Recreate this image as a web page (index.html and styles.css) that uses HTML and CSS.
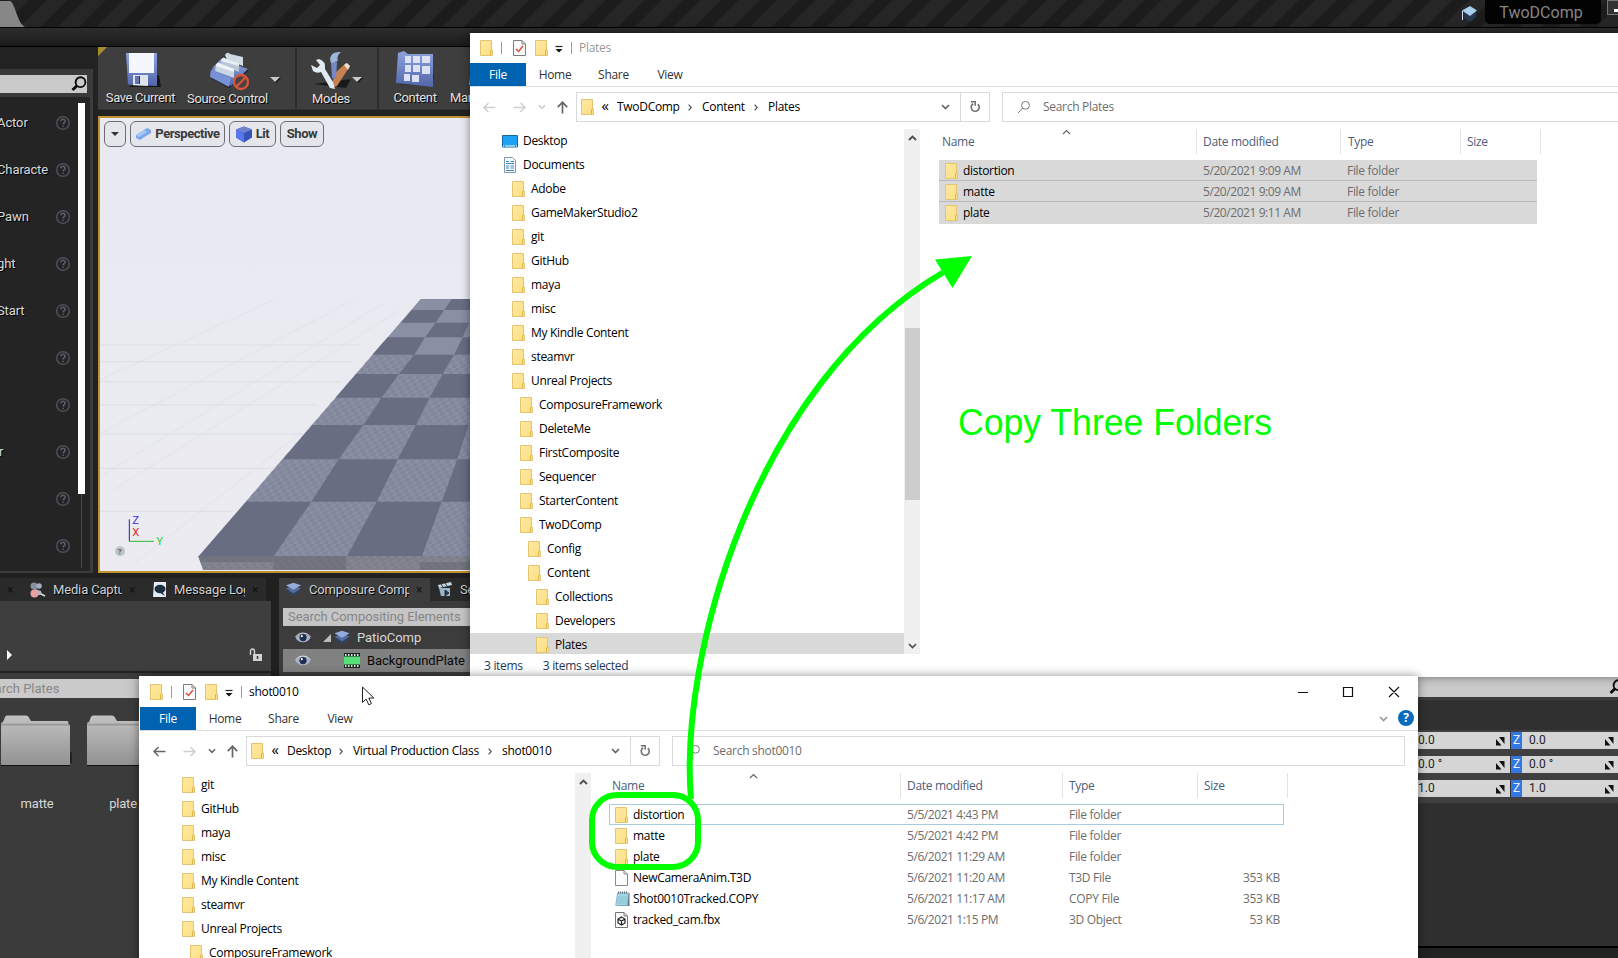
FILE: index.html
```html
<!DOCTYPE html>
<html lang="en">
<head>
<meta charset="utf-8">
<title>TwoDComp</title>
<link rel="stylesheet" href="styles.css">
</head>
<body>
<svg class="defs" width="0" height="0">
  <defs>
    <linearGradient id="gy" x1="0" x2="1" y1="0" y2="1"><stop offset="0" stop-color="#ffe9a2"/><stop offset="1" stop-color="#fbdf82"/></linearGradient>
    <linearGradient id="gb" x1="0" x2="0" y1="0" y2="1"><stop offset="0" stop-color="#8ea3dd"/><stop offset="1" stop-color="#5267ab"/></linearGradient>
    <linearGradient id="gf" x1="0" x2="0" y1="0" y2="1"><stop offset="0" stop-color="#c2c2c2"/><stop offset="1" stop-color="#929292"/></linearGradient>
    <symbol id="folder" viewBox="0 0 13 16"><path d="M.5.5h11v9.500h1v5.500h-12z" fill="url(#gy)" stroke="#e3c470"/><path d="M10.500 15v-4l1-1.500" fill="none" stroke="#dcb44c"/></symbol>
    <symbol id="check" viewBox="0 0 13 16"><path d="M.5.5h8.500l3.500 3.500v11.500h-12z" fill="#fafafa" stroke="#7d7d7d"/><path d="M9 .5v3.500h3.500" fill="none" stroke="#7d7d7d"/><path d="M3 9l2.500 2.500L10 6" fill="none" stroke="#d9513a" stroke-width="1.500"/></symbol>
    <symbol id="qat" viewBox="0 0 8 8"><path d="M.5 1.500h7" stroke="#222" stroke-width="1.200"/><path d="M.5 4h7L4 7.500z" fill="#111"/></symbol>
    <symbol id="back" viewBox="0 0 13 11"><path d="M12.500 5.500H1.200M5.500 1 1 5.500 5.500 10" fill="none" stroke="currentColor" stroke-width="1.500"/></symbol>
    <symbol id="fwd" viewBox="0 0 13 11"><path d="M.5 5.500h11.300M7.500 1 12 5.500 7.500 10" fill="none" stroke="currentColor" stroke-width="1.500"/></symbol>
    <symbol id="up" viewBox="0 0 11 13"><path d="M5.500 12.500V1.500M.8 6.200 5.500 1.200l4.700 5" fill="none" stroke="currentColor" stroke-width="1.700"/></symbol>
    <symbol id="down" viewBox="0 0 9 6"><path d="M1 1l3.500 3.500L8 1" fill="none" stroke="currentColor" stroke-width="1.700"/></symbol>
    <symbol id="caret" viewBox="0 0 9 6"><path d="M1 5l3.500-3.500L8 5" fill="none" stroke="currentColor" stroke-width="1.200"/></symbol>
    <symbol id="scup" viewBox="0 0 9 6"><path d="M1 5l3.500-3.500L8 5" fill="none" stroke="currentColor" stroke-width="1.900"/></symbol>
    <symbol id="refresh" viewBox="0 0 12 14"><path d="M8.800 4.200a4 4 0 1 1-4.600-.4" fill="none" stroke="#707070" stroke-width="1.600"/><path d="M1.800 1.800h4.400v4" fill="none" stroke="#707070" stroke-width="1.500"/></symbol>
    <symbol id="mag" viewBox="0 0 14 14"><circle cx="8.500" cy="5.300" r="3.900" fill="none" stroke="#777"/><path d="M5.600 8.200 1 13" stroke="#777"/></symbol>
    <symbol id="sep" viewBox="0 0 4 7"><path d="M.6.7 3.200 3.500.6 6.300" fill="none" stroke="#555" stroke-width="1.200"/></symbol>
    <symbol id="help" viewBox="0 0 16 16"><circle cx="8" cy="8" r="6.300" fill="none" stroke="#4c4f59" stroke-width="1.600"/><path d="M5.800 6.300c.2-2.800 4.500-2.500 4.300 0C10 7.600 8.200 7.700 8.100 9.500M8.100 10.700v1.400" fill="none" stroke="#5a5e69" stroke-width="1.600"/></symbol>
    <symbol id="layers" viewBox="0 0 18 16"><path d="M1 10l8-3 8 3-8 5z" fill="#33435f"/><path d="M1 7l8-3 8 3-8 5z" fill="#566da3"/><path d="M1 3.500 9 .8l8 2.700-8 4.700z" fill="#93acd9"/></symbol>
    <symbol id="eye" viewBox="0 0 16 12"><path d="M.5 6C4 .6 12 .6 15.500 6 12 11.600 4 11.600.5 6z" fill="#a9b5ce"/><circle cx="8" cy="5.600" r="3.600" fill="#222d4c"/><circle cx="6.800" cy="4.200" r="1.100" fill="#fff"/><path d="M.5 5C4-.2 12-.2 15.500 5" fill="none" stroke="#e6ebf5"/></symbol>
    <symbol id="resize" viewBox="0 0 10 10"><path d="M4 1h5.500v7zM1 3v6.500h5.500z" fill="#111"/></symbol>
    <symbol id="searchb" viewBox="0 0 16 16"><circle cx="9.500" cy="6.200" r="4.900" fill="none" stroke="#0a0a0a" stroke-width="1.900"/><path d="M6.200 9.500 1.500 14" stroke="#0a0a0a" stroke-width="2.800"/></symbol>
    <symbol id="bigfolder" viewBox="0 0 72 52"><path d="M4 48h69V37z" fill="#222"/><path d="M1 50V9q0-2 2-2l2-5q.6-1.500 2-1.500h19q1.800 0 2.600 1.500L31 6h36q1.500 0 1.500 1.500V10h1.500v40z" fill="url(#gf)"/><path d="M1 10h69M1 9.200h67" stroke="#8d8d8d" stroke-width=".8"/><path d="M1 50.500h69" stroke="#111"/></symbol>
  </defs>
</svg>

<div class="screen">
  <div class="titlebar"><svg class="tab-end" width="25" height="27"><path d="M0 1h10c5 1 7 22 15 26H0z" fill="#878787"/></svg>
    <div class="project"><svg width="17" height="17" viewBox="0 0 17 17"><path d="M3 7v6l6 4 6-5V6z" fill="#27384e"/><path d="M1 5.500 9 1l7 4.500L9 11z" fill="#a8cfeb"/><path d="M1.500 6v9" stroke="#d9e1e6"/></svg><span class="project-name">TwoDComp</span><i class="winmin"></i></div>
  </div>
  <div class="menubar"></div>

  <div class="workspace">
    <div class="place">
      <div class="place-search"><i></i><svg width="16" height="16"><use href="#searchb"/></svg></div>
      <div class="place-body">
        <ul class="actors">
          <li><span>Actor</span><svg><use href="#help"/></svg></li>
          <li><span>Characte</span><svg><use href="#help"/></svg></li>
          <li><span>Pawn</span><svg><use href="#help"/></svg></li>
          <li><span>ght</span><svg><use href="#help"/></svg></li>
          <li><span>Start</span><svg><use href="#help"/></svg></li>
          <li><span></span><svg><use href="#help"/></svg></li>
          <li><span></span><svg><use href="#help"/></svg></li>
          <li><span class="in">r</span><svg><use href="#help"/></svg></li>
          <li><span></span><svg><use href="#help"/></svg></li>
          <li><span></span><svg><use href="#help"/></svg></li>
        </ul>
        <div class="place-scroll"><b></b><i></i></div>
      </div>
    </div>
    <div class="center">
      <div class="toolbar">
        <div class="tool t-save"><svg width="36" height="38" viewBox="0 0 36 38"><path d="M3 36h33l-2-12z" fill="#181818"/><path d="M1 2h31v33l-29-1.500z" fill="url(#gb)"/><path d="M4 2h25v20H4z" fill="#f6f7fc"/><path d="M8 24h15v11l-15-.7z" fill="#dfe3ee"/><path d="M10 25h4v8h-4z" fill="#6476b0"/><path d="M14.500 25v8" stroke="#333"/></svg><span>Save Current</span></div>
        <div class="tool t-source"><svg width="42" height="40" viewBox="0 0 42 40"><path d="M2 27l18 10 20-18-6-1z" fill="#191919"/><path d="M4 16 12 8l27 10-17 17L1 24z" fill="url(#gb)"/><path d="M16 4q2-4 5-1l13 3v9L18 9z" fill="#cfdae5"/><path d="M12 9q2-4 5-1l13 4v9L12 14z" fill="#b9c7d6"/><path d="M12 9q2-4 5-1l13 4v3L12 10z" fill="#e9f0f5"/><path d="M7 14q2-4 5-1l13 5v9L6 20z" fill="#c9d5e0"/><path d="M7 14q2-4 5-1l13 5v3L7 15z" fill="#eff5f8"/><path d="M2 19l20 8-2 9L1 26z" fill="#7892d5"/><circle cx="32" cy="31" r="7" fill="#4a4140" stroke="#d9563c" stroke-width="2.300"/><path d="M27 36 37 26" stroke="#d9563c" stroke-width="2.300"/></svg><span>Source Control</span></div>
        <i class="arrow a1"></i><i class="rule r1"></i>
        <div class="tool t-modes"><svg width="44" height="40" viewBox="0 0 44 40"><path d="M5 33l32 4 5-9z" fill="#191919"/><path d="M26 22 37 12l4 3-13 20-6 2z" fill="#c98151"/><path d="M35 14l3-2 3 3-2 4z" fill="#efdfce"/><path d="M22 11h6l-1 17-4-1z" fill="#7389c5"/><path d="M21 8q1-8 11-7-5 4-3 9l-7 2z" fill="#9db7da"/><path d="M2 14l2 6q4 3 8 1l9 16 5 1-2-7-8-13q1-8-6-10l-3 1 4 5-3 3z" fill="#e1ebf3"/></svg><span>Modes</span></div>
        <i class="arrow a2"></i><i class="rule r2"></i>
        <div class="tool t-content"><svg width="40" height="38" viewBox="0 0 40 38"><path d="M3 33l34 2 2-12z" fill="#191919"/><path d="M3 2l6-2 4 3h25v33L1 32z" fill="url(#gb)"/><g fill="#dce1f3"><path d="M10 5h6v7h-6zM18 5h7v7h-7zM27 5h8v7h-8zM10 14h6v7h-6zM18 14h7v7h-7zM27 15h8v8h-8zM9 23h6v7H9zM17 24h7v7h-7z"/></g></svg><span>Content</span></div>
        <div class="tool t-mar"><svg width="38" height="38" viewBox="0 0 38 38"><path d="M8 5h25v29H4z" fill="#a2b3c9"/></svg><span>Marketplace</span></div>
      </div>
      <div class="viewport">
        <svg class="scene" width="372" height="456" viewBox="294 -492 1116 1368">
          <defs>
            <linearGradient id="sky" x1="0" x2="0" y1="0" y2="1"><stop offset="0" stop-color="#e9e9f2"/><stop offset="1" stop-color="#ebebf1"/></linearGradient>
            <pattern id="weave" width="26" height="22" patternUnits="userSpaceOnUse" patternTransform="skewX(-28)"><path d="M0 0h13v11H0zM13 11h13v11H13z" fill="#5e6378" opacity=".2"/></pattern>
          </defs>
          <path d="M294-492h1116V876H294z" fill="url(#sky)"/>
          <g stroke="#d8d9e0" fill="none" stroke-width="2"><path d="M300 195h780M300 245h760M300 305h720M300 375h650M300 462h610M300 565h530M300 694h400"/><path d="M300 300 820 60M300 460 1060 60M300 590 1150 70M340 630 1200 90M390 860 940 430" opacity=".65"/></g>
          <path d="M1262 57H1410V876H612L595 830z" fill="#8a8fa4"/>
          <path d="M1115 224H1410V830H595z" fill="url(#weave)"/>
          <g fill="#686d82">
            <path d="M1355 57h55v33h-77zM1235 90h98l-26 38H1203z"/>
            <path d="M1307 128h100l-19 44h-113zM1163 172h112l-32 52H1117z"/>
            <path d="M1388 172h22v52h-48zM1243 224h119l-34 58h-131zM1068 282h129l-52 71H1007z"/>
            <path d="M1328 282h82v71h-121zM1145 353h144l-41 82H1090z"/>
            <path d="M937 435h153l-74 103H849zM1248 435h157l-33 103h-179z"/>
            <path d="M1016 538h177l-63 127H934zM1372 538h38v127h-85z"/>
            <path d="M739 665h195L820 830H595zM1130 665h195l-60 165h-225z"/>
          </g>
          <path d="M595 828H1410v48H612z" fill="#83868f"/><path d="M595 828h440l4 18H602zM820 846h220l-2 30H820zM1260 846h150v30h-150z" fill="#73767f"/><path d="M595 828H1410v48H612z" fill="url(#weave)"/>
          <g stroke-width="3" fill="none"><path d="M388 718v66" stroke="#2222a6"/><path d="M388 784h74" stroke="#25bd2f"/></g>
          <g class="axis"><text x="397" y="731" fill="#3930df">Z</text><text x="397" y="768" fill="#e52d27">X</text><text x="469" y="796" fill="#25d535">Y</text></g>
          <circle cx="360" cy="814" r="15" fill="#bcc3c9"/><text class="q" x="353" y="823">?</text>
        </svg>
        <div class="vbuttons"><span class="vb v1"><i></i></span><span class="vb v2"><svg width="16" height="14" viewBox="0 0 16 14"><path d="M1 8l8-5 3-2 4 2v3l-5 3-6 4-4-2z" fill="#7ca7ea"/><path d="M1 8l8-5 3 2-8 5z" fill="#a6c9f8"/></svg>Perspective</span><span class="vb v3"><svg width="16" height="17" viewBox="0 0 16 17"><path d="M0 3.500 8 .5l8 3v8L8 16.500 0 11.500z" fill="#3952ba"/><path d="M0 3.500 8 .5l8 3-8 3.500z" fill="#7183ce"/><path d="M0 3.500 8 7v9.500L0 11.500z" fill="#5976eb"/></svg>Lit</span><span class="vb v4">Show</span></div>
      </div>
    </div>
  </div>

  <div class="lower">
    <div class="browser">
      <div class="tabs"><span class="tab x0"><em>×</em></span><span class="tab x1"><svg width="16" height="16" viewBox="0 0 16 16"><circle cx="4" cy="4" r="3.500" fill="#858fa0"/><circle cx="9" cy="4" r="2.800" fill="#a2adbd"/><path d="M5 7l6 2 1 4H5z" fill="#aeb9c8"/><path d="M11 12l4 2" stroke="#ddd" stroke-width="1.500"/><circle cx="4.500" cy="11.500" r="4" fill="#e7a1a2"/></svg><span>Media Captu</span><em>×</em></span><span class="tab x2"><svg width="14" height="15" viewBox="0 0 14 15"><path d="M1 0h12v15H0z" fill="#e4edf7"/><ellipse cx="7" cy="7" rx="5.500" ry="4.200" fill="#1d2d40"/><path d="M9 9l3 5-6-4z" fill="#1d2d40"/></svg><span>Message Log</span><em>×</em></span></div>
      <div class="path"><i></i><svg width="14" height="14" viewBox="0 0 14 14"><path d="M1.500 7V3.500q0-2.500 2-2.500t2 2.500V7" fill="none" stroke="#d2d2d2" stroke-width="1.400"/><path d="M4 6h9v7H4z" fill="#d2d2d2"/><path d="M8.500 8v3" stroke="#333" stroke-width="1.500"/></svg></div>
      <div class="asset-search">Search Plates</div>
      <div class="assets"><div><svg width="72" height="52"><use href="#bigfolder"/></svg><span>matte</span></div><div><svg width="72" height="52"><use href="#bigfolder"/></svg><span>plate</span></div></div>
    </div>
    <div class="composure">
      <div class="tabs"><span class="tab x3"><svg width="17" height="15"><use href="#layers"/></svg><span>Composure Compo</span><em>×</em></span><span class="tab x4"><svg width="15" height="15" viewBox="0 0 15 15"><path d="M1 6h11v8H3z" fill="#9bb5cb"/><path d="M0 3l13-3 1 3L1 6z" fill="#c5d8e7"/><path d="M3 2l2 3M7 1l2 3M7 8l4 3-4 3z" fill="#253140" stroke="#253140"/></svg><span>Sequencer</span></span></div>
      <div class="comp-search">Search Compositing Elements</div>
      <div class="crow"><svg class="eye" width="16" height="12"><use href="#eye"/></svg><i class="tri"></i><svg width="18" height="15"><use href="#layers"/></svg><span>PatioComp</span></div>
      <div class="crow sel"><svg class="eye" width="16" height="12"><use href="#eye"/></svg><svg class="film" width="16" height="15" viewBox="0 0 16 15"><path d="M0 0h16v15H0z" fill="#18251d"/><path d="M1 1h1.500v2H1zM4 1h1.500v2H4zM7 1h1.500v2H7zM10 1h1.500v2H10zM13 1h1.500v2H13zM1 12h1.500v2H1zM4 12h1.500v2H4zM7 12h1.500v2H7zM10 12h1.500v2H10zM13 12h1.500v2H13z" fill="#e2e2e2"/><path d="M0 3.500h16v8H0z" fill="#57df79"/></svg><span>BackgroundPlate</span></div>
    </div>
    <div class="details">
      <div class="dsearch"><svg width="16" height="16"><use href="#searchb"/></svg></div>
      <div class="dgap"></div>
      <div class="dprops">
        <div class="drow"><span class="val a">0.0</span><svg><use href="#resize"/></svg><b>Z</b><span class="val">0.0</span><svg><use href="#resize"/></svg></div>
        <div class="drow"><span class="val a">0.0 °</span><svg><use href="#resize"/></svg><b>Z</b><span class="val">0.0 °</span><svg><use href="#resize"/></svg></div>
        <div class="drow"><span class="val a">1.0</span><svg><use href="#resize"/></svg><b>Z</b><span class="val">1.0</span><svg><use href="#resize"/></svg></div>
      </div>
    </div>
  </div>

  <section class="win win1">
    <header class="caption"><svg class="fo"><use href="#folder"/></svg><i class="bar b1"></i><svg class="fo"><use href="#check"/></svg><svg class="fo f2"><use href="#folder"/></svg><svg class="qat"><use href="#qat"/></svg><i class="bar b2"></i><span class="wtitle dim">Plates</span></header>
    <nav class="ribbon"><span class="file">File</span><span class="rt h">Home</span><span class="rt s">Share</span><span class="rt v">View</span></nav>
    <div class="address"><svg class="ar off"><use href="#back"/></svg><svg class="ar n2 off"><use href="#fwd"/></svg><svg class="dn off"><use href="#down"/></svg><svg class="up"><use href="#up"/></svg>
      <div class="crumbs"><svg class="fo"><use href="#folder"/></svg><span class="laq">«</span><span class="w-two">TwoDComp</span><svg class="sp"><use href="#sep"/></svg><span class="w-content">Content</span><svg class="sp"><use href="#sep"/></svg><span>Plates</span><svg class="drop"><use href="#down"/></svg><div class="rf"><svg><use href="#refresh"/></svg></div></div>
      <div class="search"><svg><use href="#mag"/></svg><span>Search Plates</span></div></div>
    <div class="panes">
      <ul class="tree">
        <li class="l0"><svg width="16" height="13" viewBox="0 0 16 13"><path d="M.5.500h15v11.500H.5z" fill="#1fa2f4" stroke="#1668a5"/><path d="M1 11h14" stroke="#fff" stroke-dasharray="1 1 10 1"/></svg><span>Desktop</span></li>
        <li class="l0"><svg width="16" height="16" viewBox="0 0 16 16"><path d="M2.500.5h8l3 3v12h-11z" fill="#f7fbfe" stroke="#7f96a6"/><path d="M4 4.500h3M8.500 4.500H12M4 6.500h8M4 9h3M8.500 9H12M4 11h3M8.500 11H12M4 13.500h8" stroke="#3b89bc"/></svg><span>Documents</span></li>
        <li class="l1"><svg class="fo"><use href="#folder"/></svg><span>Adobe</span></li>
        <li class="l1"><svg class="fo"><use href="#folder"/></svg><span>GameMakerStudio2</span></li>
        <li class="l1"><svg class="fo"><use href="#folder"/></svg><span>git</span></li>
        <li class="l1"><svg class="fo"><use href="#folder"/></svg><span>GitHub</span></li>
        <li class="l1"><svg class="fo"><use href="#folder"/></svg><span>maya</span></li>
        <li class="l1"><svg class="fo"><use href="#folder"/></svg><span>misc</span></li>
        <li class="l1"><svg class="fo"><use href="#folder"/></svg><span>My Kindle Content</span></li>
        <li class="l1"><svg class="fo"><use href="#folder"/></svg><span>steamvr</span></li>
        <li class="l1"><svg class="fo"><use href="#folder"/></svg><span>Unreal Projects</span></li>
        <li class="l2"><svg class="fo"><use href="#folder"/></svg><span>ComposureFramework</span></li>
        <li class="l2"><svg class="fo"><use href="#folder"/></svg><span>DeleteMe</span></li>
        <li class="l2"><svg class="fo"><use href="#folder"/></svg><span>FirstComposite</span></li>
        <li class="l2"><svg class="fo"><use href="#folder"/></svg><span>Sequencer</span></li>
        <li class="l2"><svg class="fo"><use href="#folder"/></svg><span>StarterContent</span></li>
        <li class="l2"><svg class="fo"><use href="#folder"/></svg><span>TwoDComp</span></li>
        <li class="l3"><svg class="fo"><use href="#folder"/></svg><span>Config</span></li>
        <li class="l3"><svg class="fo"><use href="#folder"/></svg><span>Content</span></li>
        <li class="l4"><svg class="fo"><use href="#folder"/></svg><span>Collections</span></li>
        <li class="l4"><svg class="fo"><use href="#folder"/></svg><span>Developers</span></li>
        <li class="l4 cur"><svg class="fo"><use href="#folder"/></svg><span>Plates</span></li>
      </ul>
      <div class="scroll"><svg><use href="#scup"/></svg><i></i><svg class="bot"><use href="#down"/></svg></div>
      <div class="list">
        <div class="head"><span class="c1">Name<svg><use href="#caret"/></svg></span><span class="c2">Date modified</span><span class="c3">Type</span><span class="c4">Size</span></div>
        <div class="row"><svg class="fo"><use href="#folder"/></svg><span class="nm">distortion</span><span class="dt">5/20/2021 9:09 AM</span><span class="ty">File folder</span></div>
        <div class="row"><svg class="fo"><use href="#folder"/></svg><span class="nm">matte</span><span class="dt">5/20/2021 9:09 AM</span><span class="ty">File folder</span></div>
        <div class="row"><svg class="fo"><use href="#folder"/></svg><span class="nm">plate</span><span class="dt">5/20/2021 9:11 AM</span><span class="ty">File folder</span></div>
      </div>
    </div>
    <footer class="status"><span>3 items</span><span>3 items selected</span></footer>
  </section>

  <section class="win win2">
    <header class="caption"><svg class="fo"><use href="#folder"/></svg><i class="bar b1"></i><svg class="fo"><use href="#check"/></svg><svg class="fo f2"><use href="#folder"/></svg><svg class="qat"><use href="#qat"/></svg><i class="bar b2"></i><span class="wtitle">shot0010</span>
      <svg class="controls" width="102" height="12"><path d="M0 6.500h10M45.500 1.500h9v9h-9zM91 1l10 10M101 1 91 11" fill="none" stroke="#111" stroke-width="1.200"/></svg></header>
    <nav class="ribbon"><span class="file">File</span><span class="rt h">Home</span><span class="rt s">Share</span><span class="rt v">View</span><svg class="exp"><use href="#down"/></svg><b class="qhelp">?</b></nav>
    <div class="address"><svg class="ar"><use href="#back"/></svg><svg class="ar n2 off"><use href="#fwd"/></svg><svg class="dn"><use href="#down"/></svg><svg class="up"><use href="#up"/></svg>
      <div class="crumbs"><svg class="fo"><use href="#folder"/></svg><span class="laq">«</span><span class="w-desktop">Desktop</span><svg class="sp"><use href="#sep"/></svg><span class="w-class">Virtual Production Class</span><svg class="sp"><use href="#sep"/></svg><span>shot0010</span><svg class="drop"><use href="#down"/></svg><div class="rf"><svg><use href="#refresh"/></svg></div></div>
      <div class="search"><svg><use href="#mag"/></svg><span>Search shot0010</span></div></div>
    <div class="panes">
      <ul class="tree">
        <li class="l1"><svg class="fo"><use href="#folder"/></svg><span>git</span></li>
        <li class="l1"><svg class="fo"><use href="#folder"/></svg><span>GitHub</span></li>
        <li class="l1"><svg class="fo"><use href="#folder"/></svg><span>maya</span></li>
        <li class="l1"><svg class="fo"><use href="#folder"/></svg><span>misc</span></li>
        <li class="l1"><svg class="fo"><use href="#folder"/></svg><span>My Kindle Content</span></li>
        <li class="l1"><svg class="fo"><use href="#folder"/></svg><span>steamvr</span></li>
        <li class="l1"><svg class="fo"><use href="#folder"/></svg><span>Unreal Projects</span></li>
        <li class="l2"><svg class="fo"><use href="#folder"/></svg><span>ComposureFramework</span></li>
      </ul>
      <div class="scroll"><svg><use href="#scup"/></svg></div>
      <div class="list">
        <div class="head"><span class="c1">Name<svg><use href="#caret"/></svg></span><span class="c2">Date modified</span><span class="c3">Type</span><span class="c4">Size</span></div>
        <div class="row focus"><svg class="fo"><use href="#folder"/></svg><span class="nm">distortion</span><span class="dt">5/5/2021 4:43 PM</span><span class="ty">File folder</span></div>
        <div class="row"><svg class="fo"><use href="#folder"/></svg><span class="nm">matte</span><span class="dt">5/5/2021 4:42 PM</span><span class="ty">File folder</span></div>
        <div class="row"><svg class="fo"><use href="#folder"/></svg><span class="nm">plate</span><span class="dt">5/6/2021 11:29 AM</span><span class="ty">File folder</span></div>
        <div class="row"><svg class="fo" viewBox="0 0 13 16"><path d="M.5.500h8.500l3.500 3.500v11.500H.5zM9 .5V4h3.500" fill="#fcfcfc" stroke="#8a8a8a"/></svg><span class="nm">NewCameraAnim.T3D</span><span class="dt">5/6/2021 11:20 AM</span><span class="ty">T3D File</span><span class="sz">353 KB</span></div>
        <div class="row"><svg class="fo wide" viewBox="0 0 15 16"><path d="M3 2h11.500v13H4z" fill="#60757d"/><path d="M2.500 2h11L12.500 14.500H.7z" fill="#a4d5e4" stroke="#79a7b5" stroke-width=".7"/><path d="M3 6h9M2.600 8h9M2.400 10h9M2.200 12h9" stroke="#82bdd0" stroke-width=".7"/><path d="M3.500.5v2M5.500.5v2M7.500.5v2M9.500.5v2M11.500.5v2" stroke="#54656c"/></svg><span class="nm">Shot0010Tracked.COPY</span><span class="dt">5/6/2021 11:17 AM</span><span class="ty">COPY File</span><span class="sz">353 KB</span></div>
        <div class="row"><svg class="fo" viewBox="0 0 13 16"><path d="M.5.500h8.500l3.500 3.500v11.500H.5zM9 .5V4h3.500" fill="#fff" stroke="#777"/><path d="M6.500 5l3.500 2v4l-3.500 2L3 11V7zM3 7l3.500 2L10 7M6.500 9v4" fill="none" stroke="#222" stroke-width="1.200"/></svg><span class="nm">tracked_cam.fbx</span><span class="dt">5/6/2021 1:15 PM</span><span class="ty">3D Object</span><span class="sz">53 KB</span></div>
      </div>
    </div>
  </section>

  <svg class="notes" width="1618" height="958">
    <path d="M691 799C679 660 752 385 943 272.500" fill="none" stroke="#0f0" stroke-width="6"/>
    <path d="M972 256l-37 3.500L952.500 288z" fill="#0f0"/>
    <rect x="592" y="795" width="106" height="72" rx="25" fill="none" stroke="#0f0" stroke-width="6"/>
    <text x="958" y="435" textLength="314" lengthAdjust="spacingAndGlyphs">Copy Three Folders</text>
    <path d="M362.500 687v15.500l3.600-3.400 2.700 5.700 2.600-1.200-2.600-5.600h5z" fill="#fff" stroke="#222"/>
  </svg>
</div>
</body>
</html>
```
FILE: styles.css
```css
* { box-sizing: border-box; }
body { margin: 0; }
ul { margin: 0; padding: 0; list-style: none; }
svg { flex: none; display: block; }
.defs { position: absolute; }
.screen { position: relative; width: 1618px; height: 958px; overflow: hidden; background: #1f1f1f; font: 13px/16px Roboto, sans-serif; color: #d8d8d8; white-space: nowrap; }

/* editor chrome */
.titlebar { height: 28px; display: flex; justify-content: space-between; border-bottom: 1px solid #000; background: repeating-linear-gradient(135deg, #1c1c1c 0 4.5px, #262626 6.5px 19.5px, #1c1c1c 21.5px 27.2px); }
.project { display: flex; align-items: flex-start; }
.project > svg { margin: 5px 7px 0 0; }
.project-name { width: 116px; height: 24px; background: #030303; border-radius: 0 0 5px 5px; color: #858585; font-size: 16px; line-height: 25px; text-align: center; padding-right: 4px; }
.winmin { width: 11px; height: 15px; margin-left: 6px; border: 1px solid #777; border-right: 0; background: linear-gradient(#fff, #fff) 6px 8px / 5px 3px no-repeat #333; }
.menubar { height: 19px; background: linear-gradient(#2d2d2d, #1a1a1a); border-bottom: 1px solid #000; }
.workspace { display: flex; height: 526px; background: #222; }
.place { width: 93px; margin: 22px 5px 0 0; border-right: 3px solid #3c3c3c; border-bottom: 2px solid #3c3c3c; display: flex; flex-direction: column; }
.place-search { height: 28px; background: #3a3a3a; padding: 6px 3px 4px 0; display: flex; position: relative; }
.place-search i { flex: 1; background: #cacaca; }
.place-search svg { position: absolute; left: 71px; top: 7px; }
.place-body { flex: 1; display: flex; background: #242424; }
.actors { width: 78px; padding-top: 2px; }
.actors li { height: 47px; display: flex; align-items: center; justify-content: space-between; padding-right: 7px; text-shadow: 1px 1px #000; letter-spacing: -.1px; }
.actors span { margin-left: -3px; }
.actors .in { margin-left: -1px; }
.actors svg { width: 16px; height: 16px; }
.place-scroll { padding-top: 6px; width: 7px; display: flex; flex-direction: column; align-items: center; }
.place-scroll b { width: 7px; height: 391px; background: #fff; }
.place-scroll i { width: 1px; height: 74px; background: #484848; }
.center { width: 520px; }
.toolbar { height: 63px; background: linear-gradient(135deg, #a88c2b 6px, transparent 7px), #3e3e3e; display: flex; border-bottom: 1px solid #333; }
.tool { height: 63px; display: flex; flex-direction: column; align-items: center; justify-content: space-between; padding: 4px 0 4px; color: #e2e2e2; text-shadow: 1px 1px #000; flex: none; letter-spacing: -.35px; }
.tool span { display: block; }
.t-save { margin-left: 8px; width: 69px; }
.t-save svg { margin-left: 4px; }
.t-source { margin-left: 13px; width: 79px; }
.t-source svg { margin-left: 4px; }
.t-modes { width: 50px; margin-left: 9px; }
.t-content { width: 60px; margin-left: 6px; }
.t-mar { width: 70px; margin-left: 4px; }
.arrow { border: 5px solid transparent; border-top-color: #c9c9c9; border-bottom: 0; align-self: flex-start; margin-top: 30px; filter: drop-shadow(1px 1px #111); }
.a1 { margin-left: 3px; } .a2 { margin-left: -4px; }
.rule { width: 2px; background: #2c2c2c; }
.r1 { margin-left: 15px; } .r2 { margin-left: 15px; }
.viewport { position: relative; margin-top: 6px; width: 520px; height: 457px; border: 2px solid #c0912d; overflow: hidden; background: #eaeaf2; }
.scene { position: absolute; left: -2px; top: -2px; clip-path: inset(2px 0 2px 2px); }
.axis { font: 34px Roboto, sans-serif; }
.q { font: bold 24px Roboto, sans-serif; fill: #555e66; }
.vbuttons { position: relative; display: flex; gap: 4px; padding: 3px 0 0 4px; color: #3a3a3a; font-weight: bold; letter-spacing: -.45px; }
.vb { height: 26px; border: 1px solid #6d6d75; border-radius: 6px; display: flex; align-items: center; justify-content: center; gap: 4px; background: #e5e5ec; }
.v1 { width: 22px; } .v2 { width: 95px; } .v3 { width: 47px; } .v4 { width: 44px; }
.vb i { border: 4px solid transparent; border-top-color: #333; border-bottom: 0; }

.lower { display: flex; height: 385px; padding-top: 5px; position: relative; background: #202020; }
.tabs { height: 23px; display: flex; background: #202020; }
.tab { display: flex; align-items: center; height: 23px; background: #2a2a2a; text-shadow: 1px 1px #000; flex: none; overflow: hidden; color: #d0d0d0; letter-spacing: -.15px; }
.tab svg { margin-right: 7px; } .tab > span { overflow: hidden; }
.tab em { color: #111; font-style: normal; font-size: 12px; margin-left: 7px; text-shadow: none; }
.x0 { width: 24px; } .x1 { width: 121px; padding-left: 6px; } .x1 > span { width: 69px; }
.x2 { width: 121px; padding-left: 8px; } .x2 > span { width: 71px; }
.x3 { width: 151px; background: #3d3d3d; padding-left: 6px; } .x3 > span { width: 100px; } .x4 { width: 60px; padding-left: 8px; }
.browser { width: 271px; background: #3b3b3b; }
.path { height: 72px; padding: 37px 8px 0 7px; background: #3e3e3e; border-bottom: 2px solid #222; display: flex; align-items: flex-start; justify-content: space-between; }
.path i { margin-top: 12px; border: 5px solid transparent; border-left-color: #fff; border-right: 0; }
.path svg { margin-top: 10px; }
.asset-search { width: 280px; height: 19px; margin-top: 6px; background: linear-gradient(90deg, #cacaca 120px, #aaa); color: #888; line-height: 19px; text-indent: -20px; overflow: hidden; }
.assets { display: flex; gap: 14px; padding-top: 17px; }
.assets div { width: 72px; display: flex; flex-direction: column; align-items: center; gap: 29px; }
.assets span { letter-spacing: -.2px; padding-left: 2px; }
.composure { width: 260px; margin-left: 8px; background: #3c3c3c; }
.comp-search { margin: 7px 0 0 4px; height: 18px; background: #c5c5c5; color: #858585; padding-left: 5px; line-height: 18px; letter-spacing: -.05px; }
.crow { height: 23px; margin-left: 4px; display: flex; align-items: center; padding-left: 12px; letter-spacing: -.05px; }
.crow.sel { background: #818181; color: #080808; }
.tri { border: 4px solid transparent; border-right-color: #bbb; border-bottom-color: #bbb; margin: 0 2px 0 12px; }
.crow > span { margin-left: 6px; }
.film { margin-left: 33px; }
.sel > span { margin-left: 7px; }
.details { position: absolute; left: 1418px; top: 104px; width: 200px; height: 281px; background: linear-gradient(#2f2f2f 269px, #000 269px 271px, #222 271px); overflow: hidden; }
.dsearch { height: 20px; background: #cacaca; padding: 2px 0 0 191px; }
.dgap { height: 35px; border-top: 3px solid #3d3d3d; border-bottom: 2px solid #404040; background: #303030; }
.dprops { background: #404040; padding-bottom: 6px; display: flex; flex-direction: column; gap: 7px; }
.drow { display: flex; height: 17px; width: 210px; background: #d5d5d5; color: #222; align-items: center; font-size: 12px; line-height: 17px; }
.drow .val { width: 82px; padding-left: 7px; } .drow .val.a { width: 77px; padding-left: 0; }
.drow svg { width: 10px; height: 10px; }
.drow b { width: 12px; height: 17px; margin-left: 5px; background: #3278e2; color: #e5eefe; font-weight: normal; text-align: center; border-left: 1px solid #333; }

/* explorer windows */
.win { position: absolute; background: #fff; color: #000; font: 12px/16px "Open Sans", "Noto Sans", sans-serif; letter-spacing: -.3px; box-shadow: 0 0 9px rgba(0, 0, 0, .45); display: flex; flex-direction: column; overflow: hidden; }
.win1 { left: 470px; top: 33px; width: 1160px; height: 644px; }
.win2 { left: 139px; top: 676px; width: 1279px; height: 300px; padding-left: 1px; }
.fo { width: 13px; height: 16px; } .fo.wide { width: 15px; margin-right: -2px; }
.caption { height: 30px; padding-left: 10px; display: flex; align-items: center; flex: none; }
.bar { width: 1px; height: 12px; background: #999; }
.b1 { margin: 0 11px 0 8px; } .f2 { margin-left: 9px; } .b2 { margin: 0 7px 0 8px; }
.qat { width: 8px; height: 8px; margin-left: 7px; margin-top: 2px; }
.dim { color: #999; }
.controls { margin-left: auto; margin-right: 18px; }
.ribbon { height: 24px; display: flex; border-bottom: 1px solid #dadbdc; line-height: 24px; color: #333; flex: none; }
.file { width: 56px; background: #0063b1; color: #fff; text-align: center; }
.rt { text-align: center; } .h { width: 58px; } .s { width: 59px; } .v { width: 54px; }
.exp { width: 9px; height: 6px; margin: 9px 10px 0 auto; color: #999; }
.qhelp { width: 16px; height: 16px; border-radius: 50%; background: #0b6bbd; color: #fff; line-height: 16px; text-align: center; margin: 3px 4px 0 0; }
.address { height: 42px; padding: 5px 13px 0 13px; display: flex; flex: none; align-items: flex-start; color: #666; }
.ar { width: 13px; height: 11px; margin-top: 10px; } .n2 { margin-left: 17px; }
.dn { width: 8px; height: 6px; margin: 12px 0 0 12px; }
.up { width: 11px; height: 13px; margin: 9px 0 0 11px; }
.address .off { color: #cfcfcf; }
.crumbs { width: 414px; height: 30px; border: 1px solid #d9d9d9; margin-left: 8px; padding-left: 4px; display: flex; align-items: center; color: #000; flex: none; }
.laq { width: 12px; margin: -4px 6px 0 5px; text-align: center; font-size: 15px; }
.w-two { width: 62px; } .w-content, .w-desktop { width: 43px; } .w-class { width: 126px; }
.sp { width: 4px; height: 7px; margin: 0 10px 0 9px; }
.drop { width: 9px; height: 6px; margin-left: auto; color: #666; margin-right: 10px; }
.rf { width: 29px; height: 28px; border-left: 1px solid #d9d9d9; display: flex; align-items: center; justify-content: center; }
.rf svg { width: 12px; height: 14px; }
.search { flex: 1; height: 30px; margin-left: 12px; border: 1px solid #d9d9d9; display: flex; align-items: center; padding-left: 14px; color: #6d6d6d; }
.search svg { width: 14px; height: 14px; margin-right: 12px; }
.win1 .address { padding-right: 0; }
.panes { flex: 1; display: flex; min-height: 0; overflow: hidden; }
.tree { width: 434px; }
.tree li { height: 24px; display: flex; align-items: center; }
.tree span { margin-left: 6px; }
.l0 { padding-left: 32px; } .tree .l0 span { margin-left: 5px; } .l1 { padding-left: 42px; } .l2 { padding-left: 50px; } .l3 { padding-left: 58px; } .l4 { padding-left: 66px; }
.cur { background: #d9d9d9; }
.scroll { width: 16px; background: #f0f0f0; display: flex; flex-direction: column; align-items: center; color: #505050; }
.scroll svg { width: 9px; height: 6px; margin-top: 6px; }
.scroll i { width: 15px; height: 172px; margin-top: 187px; background: #cdcdcd; }
.scroll .bot { margin-top: auto; margin-bottom: 5px; }
.list { padding-left: 19px; flex: none; }
.head { display: flex; height: 25px; line-height: 26px; color: #4c607a; margin-bottom: 6px; }
.head span { border-right: 1px solid #e3e3e3; flex: none; position: relative; }
.head svg { width: 9px; height: 6px; position: absolute; top: 0; color: #666; }
.row { display: flex; height: 21px; align-items: center; color: #6d6d6d; }
.row .nm { color: #000; margin-left: 5px; }
.row .dt { letter-spacing: -.43px; }
.win1 .c1 { width: 258px; padding-left: 3px; } .win1 .c1 svg { left: 123px; } .win1 .c2 { width: 144px; padding-left: 6px; } .win1 .c3 { width: 120px; padding-left: 7px; } .win1 .c4 { width: 80px; padding-left: 6px; }
.win1 .row { width: 598px; background: #d9d9d9; padding: 1px 0 0 6px; border-bottom: 1px solid #b9b9b9; }
.win1 .row:last-child { border-color: #d9d9d9; height: 22px; }
.win1 .nm { width: 240px; } .win1 .dt { width: 144px; }
.status { height: 23px; flex: none; display: flex; gap: 20px; padding-left: 14px; line-height: 24px; color: #1e395b; }
.win2 .caption { height: 31px; }
.win2 .tree { width: 435px; }
.win2 .c1 { width: 293px; padding-left: 4px; } .win2 .c1 svg { left: 141px; } .win2 .c2 { width: 162px; padding-left: 6px; } .win2 .c3 { width: 135px; padding-left: 6px; } .win2 .c4 { width: 90px; padding-left: 6px; }
.win2 .list { padding-left: 17px; }
.win2 .row { width: 675px; margin-left: 1px; padding: 0 3px 0 5px; border: 1px solid transparent; }
.win2 .row.focus { border-color: #a8cbe0; }
.win2 .nm { width: 274px; } .win2 .dt { width: 162px; } .win2 .sz { margin-left: auto; }
.notes { position: absolute; left: 0; top: 0; font: 36px "Liberation Sans", sans-serif; fill: #0f0; }
```
